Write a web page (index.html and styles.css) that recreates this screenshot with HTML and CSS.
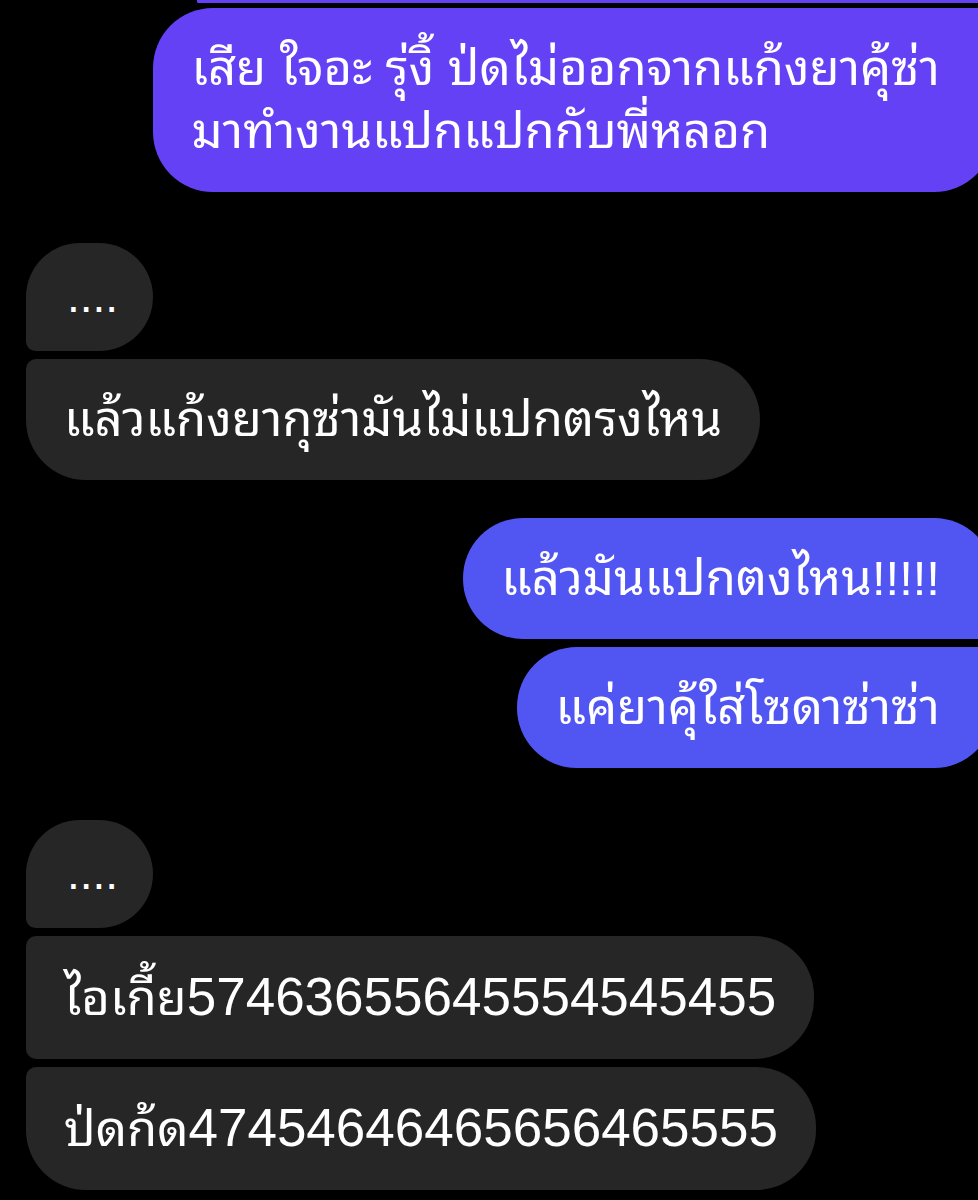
FILE: index.html
```html
<!DOCTYPE html>
<html lang="th">
<head>
  <meta charset="UTF-8">
  <title>Chat</title>
  <link rel="stylesheet" href="styles.css">
</head>
<body>
  <main class="thread">

    <!-- tail of the previous outgoing message -->
    <div class="row row-out">
      <div class="prev-edge"></div>
    </div>

    <div class="row row-out">
      <div class="bubble out out-mid-last">เสีย ใจอะ รุ่งิ้ ป่ดไม่ออกจากแก้งยาคุ้ซ่า<br>มาทำงานแปกแปกกับพี่หลอก</div>
    </div>

    <!-- incoming group 1 -->
    <div class="group group-in-1">
      <div class="row row-in">
        <div class="bubble in in-first dots">....</div>
      </div>
      <div class="row row-in">
        <div class="bubble in in-last">แล้วแก้งยากุซ่ามันไม่แปกตรงไหน</div>
      </div>
    </div>

    <!-- outgoing group -->
    <div class="group group-out">
      <div class="row row-out">
        <div class="bubble out out-first blue">แล้วมันแปกตงไหน!!!!!</div>
      </div>
      <div class="row row-out">
        <div class="bubble out out-last blue">แค่ยาคุ้ใส่โซดาซ่าซ่า</div>
      </div>
    </div>

    <!-- incoming group 2 -->
    <div class="group group-in-2">
      <div class="row row-in">
        <div class="bubble in in-first dots">....</div>
      </div>
      <div class="row row-in">
        <div class="bubble in in-mid">ไอเกี้ย<span class="num">57463655645554545455</span></div>
      </div>
      <div class="row row-in">
        <div class="bubble in in-last">ป่ดก้ด<span class="num">47454646465656465555</span></div>
      </div>
    </div>

  </main>
</body>
</html>
```

FILE: styles.css
```css
html,
body {
  margin: 0;
  background: #000;
  overflow: hidden;
}

body {
  font-family: "Liberation Sans", "Noto Sans Thai Looped", "Loma", "Garuda", "Noto Sans Thai", sans-serif;
  color: #fff;
}

.thread {
  width: 978px;
  display: flex;
  flex-direction: column;
  gap: 8px;
}

.group {
  display: flex;
  flex-direction: column;
  gap: 8px;
}

.group-in-1 {
  margin-top: 43px;
}

.group-out {
  margin-top: 30px;
}

.group-in-2 {
  margin-top: 44px;
}

.row {
  display: flex;
}

.row-in {
  justify-content: flex-start;
  padding-left: 26px;
}

.row-out {
  justify-content: flex-end;
}

/* ===== Bubbles ===== */
.bubble {
  font-size: 49px;
  line-height: 63px;
  padding: 29px 38px;
  white-space: nowrap;
}

.num {
  font-size: 53px;
}

.in {
  background: #262626;
}

.out {
  background: #6541f5;
  margin-right: -16px;
  padding-right: 54px;
}

.out.blue {
  background: #5156f2;
}

.dots {
  box-sizing: border-box;
  width: 127px;
  padding: 22px 0 23px 41px;
  font-size: 46px;
}

/* incoming corners */
.in-first {
  border-radius: 56px 56px 56px 10px;
}

.in-mid {
  border-radius: 10px 60px 60px 10px;
}

.in-last {
  border-radius: 10px 60px 60px 60px;
}

/* outgoing corners */
.out-first {
  border-radius: 60px 60px 10px 60px;
}

.out-last {
  border-radius: 60px 10px 60px 60px;
}

.out-mid-last {
  border-radius: 60px 18px 60px 60px;
}

.prev-edge {
  width: 797px;
  height: 3px;
  margin-right: -16px;
  background: #6541f5;
  border-radius: 0 0 4px 2px;
  margin-bottom: -4px;
}
```
